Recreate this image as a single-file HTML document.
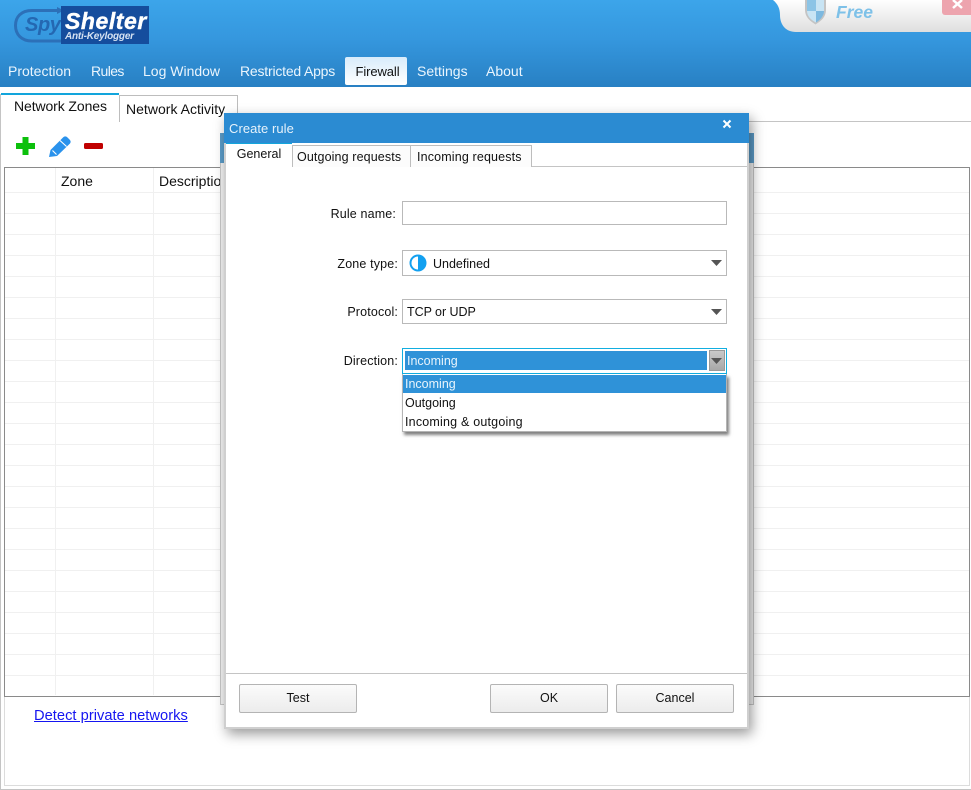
<!DOCTYPE html>
<html><head><meta charset="utf-8"><style>
html,body{margin:0;padding:0;background:#fff}
body{width:971px;height:790px;overflow:hidden;position:relative;font-family:"Liberation Sans",sans-serif;font-size:13px;color:#111}
div,a,span.a{position:absolute;box-sizing:border-box}
.t{white-space:nowrap;line-height:16px}
.nav{top:63px;color:#eaf5fd;font-size:14px;white-space:nowrap;line-height:16px}
.hl{height:1px;left:5px;width:964px;background:#f0f0f0}
.vl{width:1px;top:168px;height:527px;background:#f0f0f0}
.fld{left:402px;width:325px;border:1px solid #b9b9b9;background:#fff}
.lbl{width:100px;left:298px;text-align:right;white-space:nowrap;line-height:16px;letter-spacing:.15px}
.btn{top:684px;height:29px;width:118px;border:1px solid #b4b4b4;border-radius:2px;background:linear-gradient(#fbfbfb,#ececec);text-align:center;line-height:27px;color:#111;font-size:12.500px}
.tab{background:#fcfcfc;border:1px solid #bdbdbd;border-bottom:none;white-space:nowrap}
</style></head><body>

<div style="left:0;top:0;width:971px;height:87px;background:linear-gradient(#3ca5ea,#3597de 45%,#2880c3)"></div>

<!-- logo -->
<svg style="position:absolute;left:12px;top:6px" width="60" height="40"><path d="M50 4.500H20C9 4.500 3.500 11 3.500 19.500S9 35 20 35h30" fill="none" stroke="#2c70b8" stroke-width="3"/><path d="M45 1l7 3.500-7 3.500z" fill="#2c70b8"/></svg>
<div class="t" style="left:25px;top:13px;font:italic bold 20px/24px 'Liberation Sans',sans-serif;color:#2468b2;letter-spacing:-.4px">Spy</div>
<div style="left:61px;top:6px;width:88px;height:38px;background:#154d9d"></div>
<div class="t" style="left:65px;top:9px;font:italic bold 23px/24px 'Liberation Sans',sans-serif;color:#fff;letter-spacing:.55px;-webkit-text-stroke:.4px #fff">Shelter</div>
<div class="t" style="left:65px;top:31px;font:italic bold 10px/12px 'Liberation Sans',sans-serif;color:#d5e2f2;letter-spacing:-.2px">Anti-Keylogger</div>

<!-- free panel -->
<svg style="position:absolute;left:770px;top:0" width="201" height="33"><defs><linearGradient id="g" x1="0" y1="0" x2="0" y2="1"><stop offset="0" stop-color="#fff"/><stop offset="1" stop-color="#dfdfdf"/></linearGradient></defs><path d="M3 0C8 4 10 9 10 15c0 10 6 17 16 17H201V0z" fill="url(#g)"/></svg>
<svg style="position:absolute;left:804px;top:0" width="24" height="25"><path d="M1 0h21v10c0 7-5 11-10.500 14.500C6 21 1 17 1 10z" fill="#c4c4c4"/><path d="M3 0h9v11H3z" fill="#8cc4e6"/><path d="M12 0h8v11h-8z" fill="#c8e4f4"/><path d="M3 11h9v11.500C7 20 3 16 3 11z" fill="#c8e4f4"/><path d="M12 11h8c0 5-4 9-8 11.500z" fill="#7db9e0"/></svg>
<div class="t" style="left:836px;top:3px;font:italic bold 17.500px/19px 'Liberation Sans',sans-serif;color:#7ec1e8">Free</div>
<div style="left:942px;top:0;width:29px;height:15px;background:#eda4ae;border-radius:0 0 0 3px"></div>
<svg style="position:absolute;left:951px;top:0" width="14" height="10"><path d="M2 0l9 8M11 0L2 8" stroke="#fff" stroke-width="2.500"/></svg>

<!-- nav -->
<div class="nav" style="left:8px">Protection</div>
<div class="nav" style="left:91px;letter-spacing:-.6px">Rules</div>
<div class="nav" style="left:143px">Log Window</div>
<div class="nav" style="left:240px;letter-spacing:-.2px">Restricted Apps</div>
<div style="left:345px;top:57px;width:62px;height:28px;border-radius:2px;background:linear-gradient(#d8ecfb,#fff);text-align:center;line-height:29px;font-size:13px;color:#111;padding-left:3px;letter-spacing:-.1px">Firewall</div>
<div class="nav" style="left:417px">Settings</div>
<div class="nav" style="left:486px">About</div>

<!-- main frame -->
<div style="left:0;top:121px;width:971px;height:1px;background:#c4c4c4"></div>
<div style="left:0;top:94px;width:1px;height:696px;background:#c4c4c4"></div>
<div style="left:4px;top:697px;width:966px;height:89px;border:1px solid #dcdcdc;border-top:none"></div>
<div style="left:0;top:789px;width:971px;height:1px;background:#c4c4c4"></div>
<div class="tab" style="left:119px;top:95px;width:119px;height:27px;background:#fff;font-size:14px;line-height:27px;padding-left:6px;letter-spacing:.02px">Network Activity</div>
<div style="left:1px;top:93px;width:118px;height:30px;background:#fff;border-top:2px solid #12a5dc;font-size:14px;line-height:23px;padding-left:13px;letter-spacing:-.1px">Network Zones</div>

<!-- toolbar -->
<svg style="position:absolute;left:14px;top:134px" width="95" height="26">
<path d="M8.500 3h6v6h6.500v6h-6.500v6h-6v-6H2V9h6.500z" fill="#0cc00c"/>
<rect x="70" y="9" width="19" height="6" rx="1.500" fill="#c00000"/>
<path d="M35 23l1.500-7L49 3.500c1.500-1.500 3-1.500 4.500 0l2 2c1.500 1.500 1.500 3 0 4.500L43 22z" fill="#2a92ec"/>
<path d="M46 6.500l6.500 6M38.500 16.500l4 4" stroke="#fff" stroke-width="1.100"/>
</svg>

<!-- grid -->
<div style="left:4px;top:167px;width:966px;height:530px;border:1px solid #8a8a8a;background:#fff"></div>
<div class="hl" style="top:192px"></div><div class="hl" style="top:213px"></div><div class="hl" style="top:234px"></div><div class="hl" style="top:255px"></div><div class="hl" style="top:276px"></div><div class="hl" style="top:297px"></div><div class="hl" style="top:318px"></div><div class="hl" style="top:339px"></div><div class="hl" style="top:360px"></div><div class="hl" style="top:381px"></div><div class="hl" style="top:402px"></div><div class="hl" style="top:423px"></div><div class="hl" style="top:444px"></div><div class="hl" style="top:465px"></div><div class="hl" style="top:486px"></div><div class="hl" style="top:507px"></div><div class="hl" style="top:528px"></div><div class="hl" style="top:549px"></div><div class="hl" style="top:570px"></div><div class="hl" style="top:591px"></div><div class="hl" style="top:612px"></div><div class="hl" style="top:633px"></div><div class="hl" style="top:654px"></div><div class="hl" style="top:675px"></div>
<div class="vl" style="left:55px"></div><div class="vl" style="left:153px"></div>
<div class="t" style="left:61px;top:173px;font-size:14px">Zone</div>
<div class="t" style="left:159px;top:173px;font-size:14px">Description</div>
<a class="t" style="left:34px;top:708px;font-size:14.670px;color:#1515f0;text-decoration:underline;letter-spacing:.03px">Detect private networks</a>

<!-- underlying dialog -->
<div style="left:220px;top:133px;width:534px;height:572px;background:#f4f4f4;border:1px solid #c8c8c8"></div>
<div style="left:220px;top:133px;width:534px;height:30px;background:#5b9cc8"></div>

<!-- dialog -->
<div style="left:224px;top:113px;width:525px;height:616px;background:#fff;border:2px solid #cfcfcf;border-top:none;box-shadow:3px 5px 12px rgba(0,0,0,.4)"></div>
<div style="left:224px;top:113px;width:525px;height:30px;background:#2b8bd2"></div>
<div class="t" style="left:229px;top:121px;color:#e6f2fb;letter-spacing:.05px">Create rule</div>
<svg style="position:absolute;left:722px;top:119px" width="10" height="10"><path d="M1.500 1.500l7 7M8.500 1.500l-7 7" stroke="#fff" stroke-width="2"/></svg>

<div style="left:226px;top:166px;width:521px;height:1px;background:#c4c4c4"></div>
<div class="tab" style="left:292px;top:145px;width:119px;height:22px;font-size:12.500px;line-height:23px;padding-left:4px;letter-spacing:.12px">Outgoing requests</div>
<div class="tab" style="left:410px;top:145px;width:122px;height:22px;font-size:12.500px;line-height:23px;padding-left:6px;letter-spacing:.15px">Incoming requests</div>
<div style="left:226px;top:143px;width:66px;height:24px;background:#fff;border-top:1px solid #12a5dc;text-align:center;font-size:12.500px;line-height:20px">General</div>

<div class="lbl" style="top:206px;font-size:12.500px;left:296px">Rule name:</div>
<div class="fld" style="top:201px;height:24px"></div>

<div class="lbl" style="top:256px;font-size:12.500px">Zone type:</div>
<div class="fld" style="top:250px;height:26px"></div>
<svg style="position:absolute;left:409px;top:254px" width="18" height="18"><circle cx="9" cy="9" r="8.500" fill="#12a0f0"/><path d="M9 2.500a6.500 6.500 0 0 0 0 13z" fill="#fff"/></svg>
<div class="t" style="left:433px;top:256px;font-size:12.500px">Undefined</div>
<svg style="position:absolute;left:711px;top:259px" width="12" height="8"><path d="M0 1h11L5.500 7z" fill="#555"/></svg>

<div class="lbl" style="top:304px;font-size:12.500px">Protocol:</div>
<div class="fld" style="top:299px;height:25px"></div>
<div class="t" style="left:407px;top:304px;font-size:12.500px;letter-spacing:-.05px">TCP or UDP</div>
<svg style="position:absolute;left:711px;top:308px" width="12" height="8"><path d="M0 1h11L5.500 7z" fill="#555"/></svg>

<div class="lbl" style="top:353px;font-size:12.500px">Direction:</div>
<div class="fld" style="top:348px;height:26px;border-color:#12aee0"></div>
<div style="left:405px;top:351px;width:302px;height:19px;background:#2f92d8;color:#e8f4fc;font-size:12.500px;line-height:20px;padding-left:2px">Incoming</div>
<div style="left:709px;top:350px;width:16px;height:21px;background:linear-gradient(#c9c9c9,#a8a8a8);border:1px solid #999"></div>
<svg style="position:absolute;left:711px;top:357px" width="12" height="8"><path d="M0 1h11L5.500 7z" fill="#555"/></svg>

<div style="left:402px;top:374px;width:325px;height:58px;background:#fff;border:1px solid #b4b4b4;border-top:none;box-shadow:2px 3px 3px rgba(0,0,0,.5)"></div>
<div style="left:403px;top:375px;width:323px;height:18px;background:#2f92d8;color:#e8f4fc;font-size:12.500px;line-height:19px;padding-left:2px">Incoming</div>
<div class="t" style="left:405px;top:395px;font-size:12.500px">Outgoing</div>
<div class="t" style="left:405px;top:414px;font-size:12.500px;letter-spacing:.2px">Incoming &amp; outgoing</div>

<!-- footer -->
<div style="left:226px;top:673px;width:521px;height:1px;background:#c4c4c4"></div>
<div class="btn" style="left:239px">Test</div>
<div class="btn" style="left:490px">OK</div>
<div class="btn" style="left:616px">Cancel</div>

</body></html>
